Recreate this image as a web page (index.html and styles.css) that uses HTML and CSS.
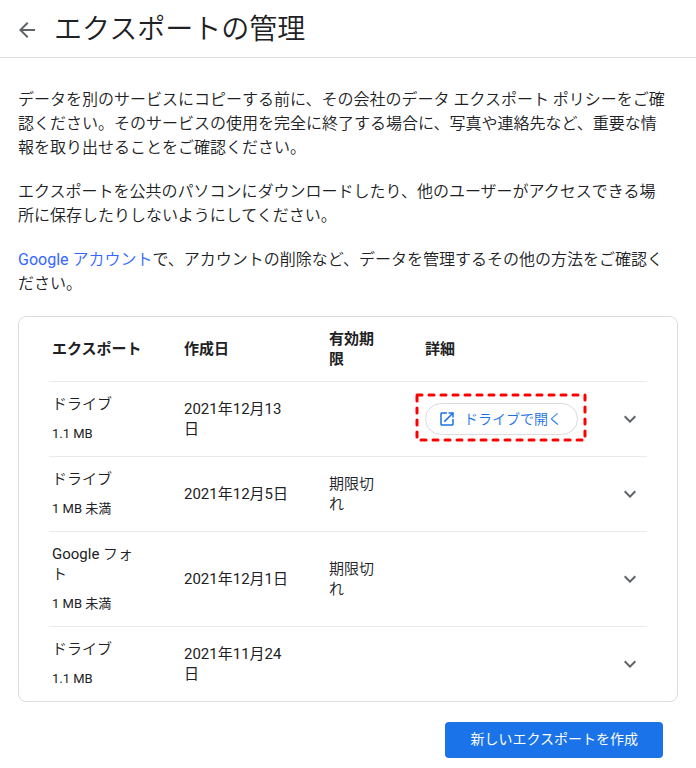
FILE: index.html
```html
<!DOCTYPE html>
<html lang="ja">
<head>
    <meta charset="UTF-8">
    <meta name="viewport" content="width=device-width, initial-scale=1.0">
    <title>エクスポートの管理</title>
    <link rel="stylesheet" href="styles.css">
</head>
<body>
    <header class="header">
        <a href="#" class="back" aria-label="戻る">
            <svg width="24" height="24" viewBox="0 0 24 24"><path d="M20 11H7.83l5.59-5.59L12 4l-8 8 8 8 1.41-1.41L7.83 13H20v-2z"/></svg>
        </a>
        <h1 class="title">エクスポートの管理</h1>
    </header>

    <main class="content">
        <div class="intro">
            <p>データを別のサービスにコピーする前に、その会社のデータ エクスポート ポリシーをご確認ください。そのサービスの使用を完全に終了する場合に、写真や連絡先など、重要な情報を取り出せることをご確認ください。</p>
            <p>エクスポートを公共のパソコンにダウンロードしたり、他のユーザーがアクセスできる場所に保存したりしないようにしてください。</p>
            <p><a href="#"><span class="latin">Google</span> アカウント</a>で、アカウントの削除など、データを管理するその他の方法をご確認ください。</p>
        </div>

        <div class="card">
            <table class="exports">
                <colgroup>
                    <col class="col-name">
                    <col class="col-date">
                    <col class="col-expiry">
                    <col>
                    <col class="col-toggle">
                </colgroup>
                <thead>
                    <tr>
                        <th>エクスポート</th>
                        <th>作成日</th>
                        <th>有効期限</th>
                        <th>詳細</th>
                        <td></td>
                    </tr>
                </thead>
                <tbody>
                    <tr>
                        <td>ドライブ<div class="size">1.1 MB</div></td>
                        <td class="date">2021年12月13日</td>
                        <td></td>
                        <td class="details">
                            <div class="highlight">
                                <a href="#" class="open-btn">
                                    <svg width="18" height="18" viewBox="0 0 24 24"><path d="M19 19H5V5h7V3H5c-1.11 0-2 .9-2 2v14c0 1.1.89 2 2 2h14c1.1 0 2-.9 2-2v-7h-2v7zM14 3v2h3.59l-9.83 9.83 1.41 1.41L19 6.41V10h2V3h-7z"/></svg>
                                    <span>ドライブで開く</span>
                                </a>
                                <svg class="highlight-box" viewBox="0 0 172 49" aria-hidden="true"><path d="M2 2H170V47H2Z"/></svg>
                            </div>
                        </td>
                        <td class="toggle"><button type="button" aria-label="詳細を表示"><svg width="24" height="24" viewBox="0 0 24 24"><path d="M16.59 8.59L12 13.17 7.41 8.59 6 10l6 6 6-6z"/></svg></button></td>
                    </tr>
                    <tr>
                        <td>ドライブ<div class="size">1 MB 未満</div></td>
                        <td class="date">2021年12月5日</td>
                        <td>期限切れ</td>
                        <td></td>
                        <td class="toggle"><button type="button" aria-label="詳細を表示"><svg width="24" height="24" viewBox="0 0 24 24"><path d="M16.59 8.59L12 13.17 7.41 8.59 6 10l6 6 6-6z"/></svg></button></td>
                    </tr>
                    <tr>
                        <td><span class="latin">Google</span> フォト<div class="size">1 MB 未満</div></td>
                        <td class="date">2021年12月1日</td>
                        <td>期限切れ</td>
                        <td></td>
                        <td class="toggle"><button type="button" aria-label="詳細を表示"><svg width="24" height="24" viewBox="0 0 24 24"><path d="M16.59 8.59L12 13.17 7.41 8.59 6 10l6 6 6-6z"/></svg></button></td>
                    </tr>
                    <tr>
                        <td>ドライブ<div class="size">1.1 MB</div></td>
                        <td class="date">2021年11月24日</td>
                        <td></td>
                        <td></td>
                        <td class="toggle"><button type="button" aria-label="詳細を表示"><svg width="24" height="24" viewBox="0 0 24 24"><path d="M16.59 8.59L12 13.17 7.41 8.59 6 10l6 6 6-6z"/></svg></button></td>
                    </tr>
                </tbody>
            </table>
        </div>

        <div class="actions">
            <button type="button" class="btn">新しいエクスポートを作成</button>
        </div>
    </main>
</body>
</html>
```
FILE: styles.css
```css
* {
    margin: 0;
    padding: 0;
    box-sizing: border-box;
}

body {
    font-family: Roboto, "Noto Sans CJK JP", sans-serif;
    font-size: 16px;
    font-weight: 350;
    line-height: 24px;
    color: #202124;
    background-color: #fff;
}

a {
    color: #3367ff;
    text-decoration: none;
}

svg {
    display: block;
    fill: currentColor;
}

/* Roboto Light is too thin next to the Japanese text */
.latin,
.date,
.size {
    font-weight: 400;
}

.header {
    display: flex;
    align-items: center;
    gap: 15px;
    height: 58px;
    padding: 2px 15px 0;
    border-bottom: 1px solid #dadce0;
}

.back {
    color: #5f6368;
}

.title {
    font-size: 28px;
    font-weight: 350;
    line-height: 36px;
}

.content {
    padding: 30px 18px 10px;
}

.intro {
    display: flex;
    flex-direction: column;
    gap: 20px;
    padding-right: 8px;
}

.card {
    margin-top: 20px;
    padding: 0 30px;
    border: 1px solid #dadce0;
    border-radius: 8px;
}

.exports {
    width: 100%;
    table-layout: fixed;
    border-collapse: separate;
    border-spacing: 0;
    font-size: 15px;
    line-height: 20px;
}

.col-name {
    width: 132px;
}

.col-date {
    width: 145px;
}

.col-expiry {
    width: 96px;
}

.col-toggle {
    width: 34px;
}

.exports th,
.exports td {
    padding: 12px 36px 12px 3px;
    border-bottom: 1px solid #e8eaed;
    text-align: left;
    vertical-align: middle;
}

.exports th {
    font-weight: 700;
}

.exports tbody tr:last-child td {
    border-bottom: none;
}

.size {
    margin-top: 10px;
    font-size: 13px;
}

.exports .details {
    padding: 0 0 0 3px;
}

.exports .toggle {
    padding: 0;
}

.toggle button {
    display: flex;
    align-items: center;
    justify-content: center;
    width: 100%;
    border: none;
    background: none;
    color: #5f6368;
    cursor: pointer;
}

.highlight {
    position: relative;
    width: fit-content;
}

/* dashed frame lies over the button */
.highlight-box {
    position: absolute;
    top: -10px;
    left: -10px;
    width: 172px;
    height: 49px;
    fill: none;
    stroke: #f00;
    stroke-width: 3;
    stroke-dasharray: 5 7;
    stroke-linecap: round;
    pointer-events: none;
}

.open-btn {
    display: flex;
    align-items: center;
    gap: 8px;
    height: 32px;
    padding: 0 15px 0 12px;
    border: 1px solid #dadce0;
    border-radius: 16px;
    color: #1a73e8;
    font-size: 14px;
}

.actions {
    display: flex;
    justify-content: flex-end;
    padding: 20px 15px 0;
}

.btn {
    height: 36px;
    padding: 0 25px 4px;
    border: none;
    border-radius: 4px;
    background-color: #1a73e8;
    color: #fff;
    font-family: inherit;
    font-size: 14px;
    font-weight: 400;
    cursor: pointer;
}
```
